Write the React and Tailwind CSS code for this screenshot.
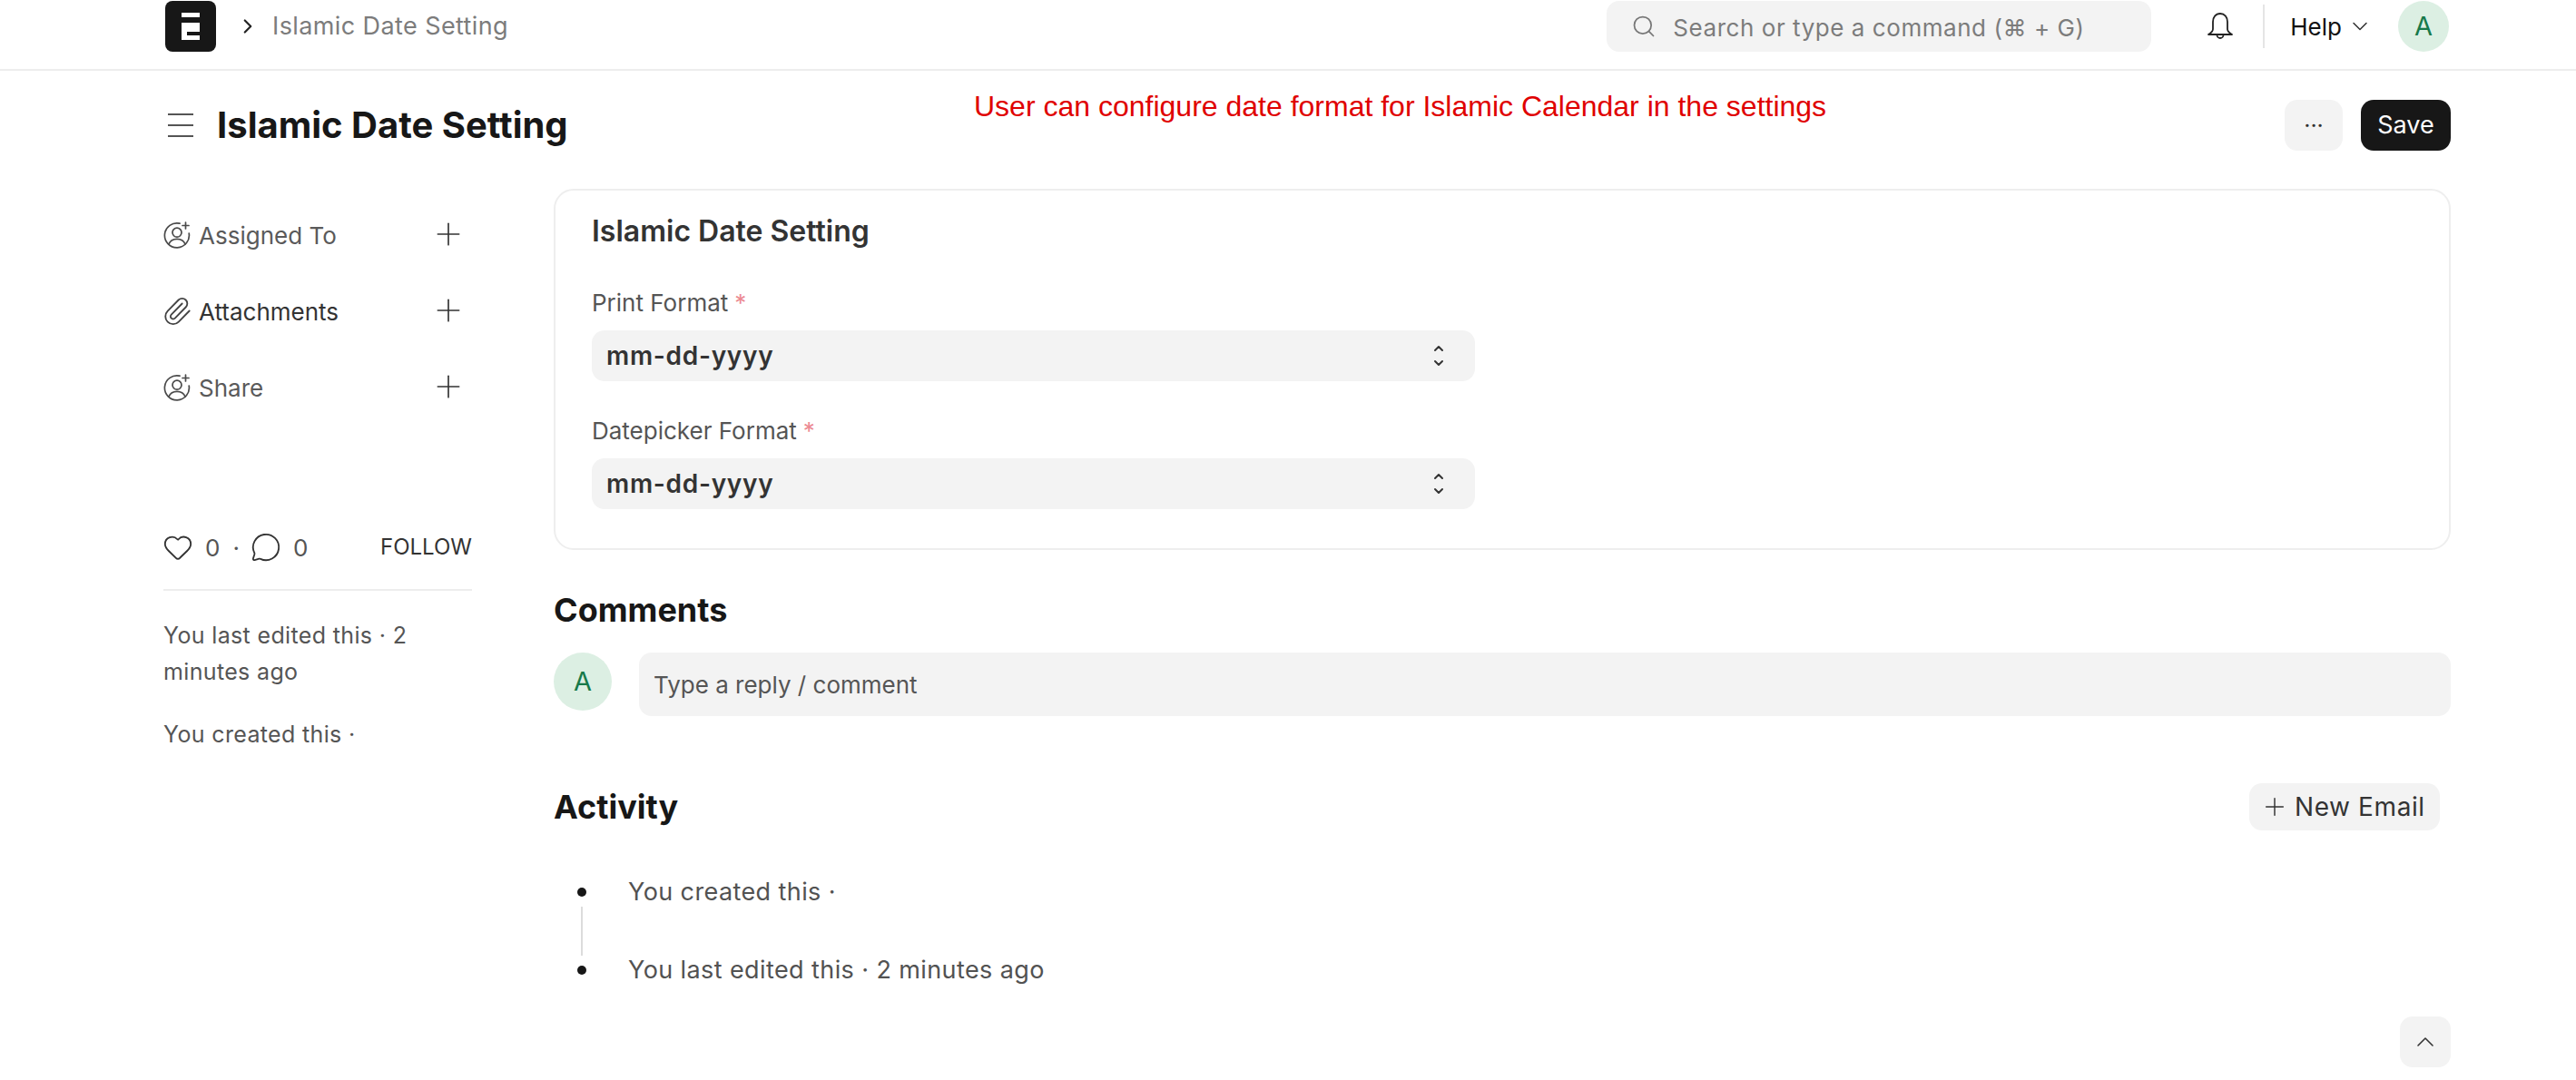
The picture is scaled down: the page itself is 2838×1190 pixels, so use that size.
import { ChevronDown, ChevronRight, ChevronUp, Heart, MessageCircle, Paperclip, Plus, Search } from 'lucide-react'

const UserPlusIcon = () => (
  <svg width="30" height="30" viewBox="0 0 30 30" fill="none" stroke="#4a4a4a" strokeWidth="1.7" strokeLinecap="round" strokeLinejoin="round" className="shrink-0">
    <path d="M18 2.200A13.500 13.500 0 1 0 28.200 13" />
    <circle cx="15" cy="12.200" r="5" />
    <path d="M6 25c1.600-3.800 5-5.600 9-5.600s7.400 1.800 9 5.600" />
    <path d="M24.500 1v7M21 4.500h7" />
  </svg>
)

const SelectArrows = () => (
  <svg width="12" height="26" viewBox="0 0 12 26" fill="none" stroke="#333" strokeWidth="2" strokeLinecap="round" strokeLinejoin="round">
    <path d="M2 7l4-4 4 4" />
    <path d="M2 19l4 4 4-4" />
  </svg>
)

function SidebarRow({ icon, label, labelColor }) {
  return (
    <div className="flex h-[84px] items-center justify-between pr-[6px]">
      <div className={`flex items-center gap-[9px] text-[26px] ${labelColor}`}>
        {icon}
        <span>{label}</span>
      </div>
      <Plus size={40} strokeWidth={1} color="#333" className="-translate-y-px" />
    </div>
  )
}

function SelectField({ label }) {
  return (
    <div>
      <div className="flex h-[34px] items-center gap-[7px] text-[26px] text-[#555]">
        {label}
        <span className="text-[#ec8a92]">*</span>
      </div>
      <div className="mt-[14px] flex h-[56px] w-[973px] items-center justify-between rounded-[14px] bg-[#f3f3f3] pl-[16px] pr-[34px]">
        <span className="text-[28px] font-semibold tracking-[0.7px] text-[#333]">mm-dd-yyyy</span>
        <SelectArrows />
      </div>
    </div>
  )
}

function ActivityRow({ text }) {
  return (
    <div className="flex h-[32px] items-center">
      <span className="ml-[26px] h-[10px] w-[10px] rounded-full bg-[#171717]" />
      <span className="ml-[46px] text-[27px] tracking-[0.4px] text-[#525252]">{text}</span>
    </div>
  )
}

export default function App() {
  return (
    <div className="relative h-[1190px] w-[2838px] overflow-hidden bg-white font-['Inter',sans-serif]">
      <header className="h-[78px] border-b-2 border-[#ededed] pl-[182px] pr-[140px] pt-px">
        <div className="flex items-center">
          <div className="flex h-14 w-14 items-center justify-center rounded-[8px] bg-[#171717]">
            <svg width="20" height="30" viewBox="0 0 20 30" fill="#fff">
              <path d="M0 0h20v5H0zM0 11h20v10H6v4h14v5H0z" />
            </svg>
          </div>
          <ChevronRight size={26} strokeWidth={2} color="#222" className="ml-[22px]" />
          <span className="ml-[14px] pt-px text-[27px] tracking-[0.4px] text-[#7c7c7c]">Islamic Date Setting</span>
          <div className="ml-auto flex h-14 w-[600px] items-center rounded-[14px] bg-[#f3f3f3] pl-[27px]">
            <Search size={28} strokeWidth={1.5} color="#777" />
            <span className="ml-[18px] pt-[2px] text-[26px] tracking-[0.55px] text-[#7c7c7c]">Search or type a command (⌘ + G)</span>
          </div>
          <svg width="32" height="34" viewBox="0 0 32 34" fill="none" stroke="#222" strokeWidth="1.8" strokeLinejoin="round" className="ml-[60px]">
            <path d="M16 3c-5 0-8 4-8 9v8c0 3-2 4-5 6h26c-3-2-5-3-5-6v-8c0-5-3-9-8-9z" />
            <path d="M12.500 26.500a3.500 3.500 0 0 0 7 0" />
          </svg>
          <div className="ml-[31px] h-[48px] w-[2px] bg-[#e5e5e5]" />
          <span className="ml-[28px] text-[26px] text-[#111]">Help</span>
          <ChevronDown size={28} strokeWidth={1.3} color="#333" className="ml-[6px]" />
          <div className="ml-[28px] flex h-14 w-14 shrink-0 items-center justify-center rounded-full bg-[#dcefe3] text-[29px] text-[#17794a]">A</div>
        </div>
      </header>

      <div className="pl-[180px] pr-[138px]">
        <div className="mb-[10px] flex h-[120px] items-center">
          <svg width="34" height="30" viewBox="0 0 34 30" fill="none" stroke="#555" strokeWidth="1.8" className="ml-[2px]">
            <path d="M3 3h28M3 15h28M3 27h28" />
          </svg>
          <h1 className="ml-[23px] text-[40px] font-bold leading-none text-[#171717]">Islamic Date Setting</h1>
          <div className="ml-auto flex items-center gap-5">
            <button className="flex h-14 w-16 items-center justify-center rounded-[14px] bg-[#f3f3f3] text-[25px] leading-none text-[#333]">···</button>
            <button className="h-14 w-[99px] rounded-[14px] bg-[#171717] text-[27px] text-white">Save</button>
          </div>
        </div>

        <div className="flex gap-[90px]">
          <aside className="w-[340px] shrink-0 pt-[9px]">
            <SidebarRow icon={<UserPlusIcon />} label="Assigned To" labelColor="text-[#5a5a5a]" />
            <SidebarRow icon={<Paperclip size={34} strokeWidth={1.3} color="#444" className="-mx-[2px]" />} label="Attachments" labelColor="text-[#333]" />
            <SidebarRow icon={<UserPlusIcon />} label="Share" labelColor="text-[#5a5a5a]" />

            <div className="mt-[118px] flex h-[32px] items-center text-[26px] text-[#555]">
              <Heart size={34} strokeWidth={1.3} color="#333" className="-ml-px" />
              <span className="ml-[13px]">0</span>
              <span className="ml-[14px]">·</span>
              <MessageCircle size={34} strokeWidth={1.3} color="#333" className="ml-[12px]" />
              <span className="ml-[13px]">0</span>
              <span className="ml-auto text-[24px] text-[#333]">FOLLOW</span>
            </div>
            <div className="mt-[30px] h-[2px] bg-[#ededed]" />
            <div className="mt-[29px] text-[25px] leading-[40px] tracking-[0.35px] text-[#555]">
              You last edited this · 2 minutes ago
            </div>
            <div className="mt-[29px] text-[25px] leading-[40px] tracking-[0.35px] text-[#555]">You created this ·</div>
          </aside>

          <main className="min-w-0 flex-1">
            <section className="h-[398px] rounded-[22px] border-2 border-[#eeeeee] px-[40px] pt-[27px]">
              <h2 className="text-[32px] font-semibold leading-[36px] text-[#333]">Islamic Date Setting</h2>
              <div className="mt-[43px] flex flex-col gap-[37px]">
                <SelectField label="Print Format" />
                <SelectField label="Datepicker Format" />
              </div>
            </section>

            <h2 className="mt-[46px] text-[36px] font-bold leading-[40px] text-[#171717]">Comments</h2>
            <div className="mt-[27px] flex gap-[30px]">
              <div className="flex h-16 w-16 shrink-0 items-center justify-center rounded-full bg-[#dcefe3] text-[29px] text-[#17794a]">A</div>
              <div className="flex h-[70px] flex-1 items-center rounded-[14px] bg-[#f3f3f3] pl-[16px] text-[26px] text-[#555]">
                Type a reply / comment
              </div>
            </div>

            <div className="mt-[74px] flex h-[52px] items-center justify-between pr-[12px]">
              <h2 className="text-[36px] font-bold leading-[40px] text-[#171717]">Activity</h2>
              <button className="flex h-[52px] w-[210px] items-center rounded-[14px] bg-[#f3f3f3] pl-[12px] text-[28px] tracking-[0.6px] text-[#333]">
                <Plus size={32} strokeWidth={1.1} className="mr-[6px]" />
                New Email
              </button>
            </div>

            <div className="mt-[52px] w-fit">
              <ActivityRow text="You created this ·" />
              <div className="ml-[30px] h-[54px] w-[2px] bg-[#dcdcdc]" />
              <ActivityRow text="You last edited this · 2 minutes ago" />
            </div>

            <div className="mt-[35px] flex justify-end">
              <button className="flex h-14 w-14 items-center justify-center rounded-[14px] bg-[#f3f3f3]">
                <ChevronUp size={32} strokeWidth={1.2} color="#333" />
              </button>
            </div>
          </main>
        </div>
      </div>

      <p className="absolute left-[1073px] top-[98px] font-['Liberation_Sans',sans-serif] text-[32px] leading-[38px] text-[#e00000]">
        User can configure date format for Islamic Calendar in the settings
      </p>
    </div>
  )
}
